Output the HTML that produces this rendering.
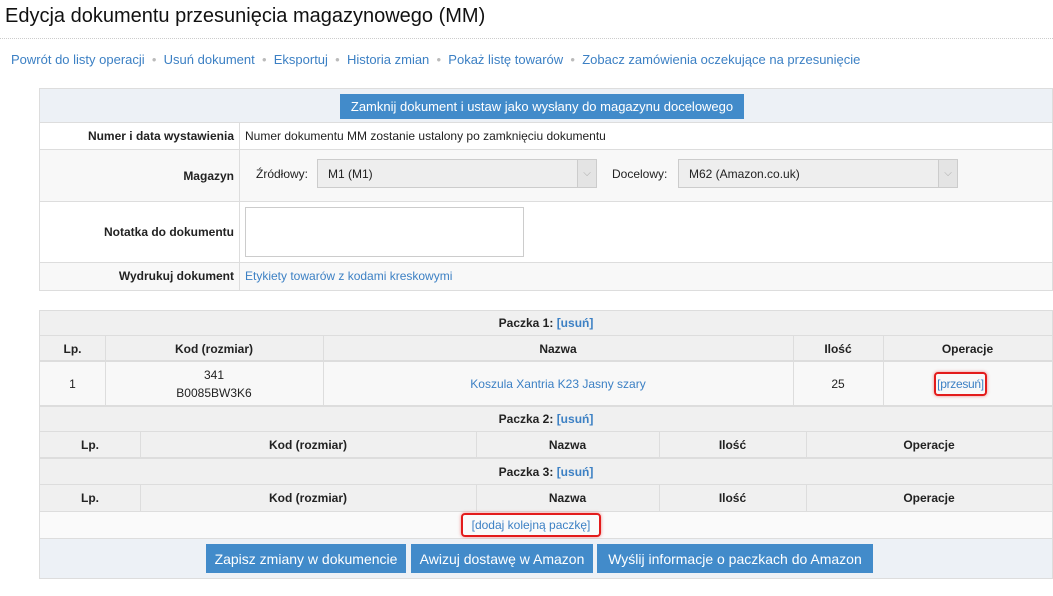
<!DOCTYPE html>
<html><head><meta charset="utf-8"><style>
body{margin:0;width:1053px;height:596px;background:#fff;font-family:"Liberation Sans",sans-serif;color:#222;position:relative;overflow:hidden;font-size:12px}
.a{position:absolute;box-sizing:border-box}
a{color:#3c80c4;text-decoration:none}
.c{display:flex;align-items:center;justify-content:center;text-align:center}
.r{display:flex;align-items:center;justify-content:flex-end;padding-right:5px;font-weight:bold}
.l{display:flex;align-items:center;padding-left:5px}
.b{font-weight:bold}
.btn{background:#428bca;color:#fff;font-size:14px}
.sel{background:#eee;border:1px solid #ccc;font-size:12px;display:flex;align-items:center;padding-left:10px}
.arr{position:absolute;right:0;top:0;bottom:0;width:18px;border-left:1px solid #ccc;background:#e4e4e4;color:#aaa;font-size:10px;display:flex;align-items:center;justify-content:center}
.red{border:2px solid #e31b1b;border-radius:4px;box-shadow:0 0 3px rgba(227,27,27,.5)}
</style></head><body>
<div class="a" style="left:5px;top:5px;font-size:20px;color:#111">Edycja dokumentu przesunięcia magazynowego (MM)</div>
<div class="a" style="left:0;top:38px;width:1053px;border-top:1px dotted #ccc"></div>
<div class="a" style="left:11px;top:52px;font-size:13px;color:#bbb;white-space:nowrap"><a>Powrót do listy operacji</a> &nbsp;•&nbsp; <a>Usuń dokument</a> &nbsp;•&nbsp; <a>Eksportuj</a> &nbsp;•&nbsp; <a>Historia zmian</a> &nbsp;•&nbsp; <a>Pokaż listę towarów</a> &nbsp;•&nbsp; <a>Zobacz zamówienia oczekujące na przesunięcie</a></div>

<div class="a" style="left:39px;top:88px;width:1014px;height:203px;border:1px solid #ddd;background:#fff"></div>
<div class="a" style="left:40px;top:89px;width:1012px;height:34px;background:#edf1f6;border-bottom:1px solid #ddd"></div>
<div class="a btn c" style="left:340px;top:94px;width:404px;height:25px;font-size:13px">Zamknij dokument i ustaw jako wysłany do magazynu docelowego</div>
<div class="a" style="left:40px;top:149px;width:1012px;height:53px;background:#f8f8f8;border-top:1px solid #ddd;border-bottom:1px solid #ddd"></div>
<div class="a" style="left:40px;top:262px;width:1012px;height:28px;background:#f8f8f8;border-top:1px solid #ddd"></div>
<div class="a" style="left:239px;top:123px;height:167px;border-left:1px solid #ddd"></div>
<div class="a r" style="left:40px;top:123px;width:199px;height:26px">Numer i data wystawienia</div>
<div class="a l" style="left:240px;top:123px;height:26px">Numer dokumentu MM zostanie ustalony po zamknięciu dokumentu</div>
<div class="a r" style="left:40px;top:149px;width:199px;height:53px">Magazyn</div>
<div class="a" style="left:256px;top:167px;font-size:12px">Źródłowy:</div>
<div class="a sel" style="left:317px;top:159px;width:280px;height:29px">M1 (M1)<span class="arr">⌵</span></div>
<div class="a" style="left:612px;top:167px">Docelowy:</div>
<div class="a sel" style="left:678px;top:159px;width:280px;height:29px">M62 (Amazon.co.uk)<span class="arr">⌵</span></div>
<div class="a r" style="left:40px;top:202px;width:199px;height:60px">Notatka do dokumentu</div>
<div class="a" style="left:245px;top:207px;width:279px;height:50px;border:1px solid #ccc;background:#fff"></div>
<div class="a r" style="left:40px;top:262px;width:199px;height:28px">Wydrukuj dokument</div>
<div class="a l" style="left:240px;top:262px;height:28px"><a>Etykiety towarów z kodami kreskowymi</a></div>

<div class="a" style="left:39px;top:310px;width:1014px;height:269px;border:1px solid #ddd;background:#f8f8f8"></div>
<div class="a c b" style="left:40px;top:311px;width:1012px;height:25px;background:#f0f0f0;border-bottom:1px solid #ddd">Paczka 1:&nbsp;<a>[usuń]</a></div>
<div class="a" style="left:40px;top:336px;width:1012px;height:26px;background:#f0f0f0;border-bottom:2px solid #ddd"></div>
<div class="a c b" style="left:40px;top:336px;width:65px;height:26px">Lp.</div>
<div class="a c b" style="left:105px;top:336px;width:218px;height:26px">Kod (rozmiar)</div>
<div class="a c b" style="left:323px;top:336px;width:470px;height:26px">Nazwa</div>
<div class="a c b" style="left:793px;top:336px;width:90px;height:26px">Ilość</div>
<div class="a c b" style="left:883px;top:336px;width:169px;height:26px">Operacje</div>
<div class="a c" style="left:40px;top:362px;width:65px;height:43px">1</div>
<div class="a c" style="left:105px;top:362px;width:218px;height:43px;line-height:18px">341<br>B0085BW3K6</div>
<div class="a c" style="left:323px;top:362px;width:470px;height:43px"><a>Koszula Xantria K23 Jasny szary</a></div>
<div class="a c" style="left:793px;top:362px;width:90px;height:43px">25</div>
<div class="a c" style="left:876px;top:362px;width:169px;height:43px"><span class="red" style="padding:3px 1px;letter-spacing:-0.3px"><a>[przesuń]</a></span></div>
<div class="a" style="left:105px;top:336px;height:69px;border-left:1px solid #ddd"></div>
<div class="a" style="left:323px;top:336px;height:69px;border-left:1px solid #ddd"></div>
<div class="a" style="left:793px;top:336px;height:69px;border-left:1px solid #ddd"></div>
<div class="a" style="left:883px;top:336px;height:69px;border-left:1px solid #ddd"></div>

<div class="a c b" style="left:40px;top:405px;width:1012px;height:27px;background:#f0f0f0;border-top:2px solid #ddd;border-bottom:1px solid #ddd">Paczka 2:&nbsp;<a>[usuń]</a></div>
<div class="a" style="left:40px;top:432px;width:1012px;height:27px;background:#f0f0f0;border-bottom:2px solid #ddd"></div>
<div class="a c b" style="left:40px;top:432px;width:100px;height:26px">Lp.</div>
<div class="a c b" style="left:140px;top:432px;width:336px;height:26px">Kod (rozmiar)</div>
<div class="a c b" style="left:476px;top:432px;width:183px;height:26px">Nazwa</div>
<div class="a c b" style="left:659px;top:432px;width:147px;height:26px">Ilość</div>
<div class="a c b" style="left:806px;top:432px;width:246px;height:26px">Operacje</div>
<div class="a" style="left:140px;top:432px;height:26px;border-left:1px solid #ddd"></div>
<div class="a" style="left:476px;top:432px;height:26px;border-left:1px solid #ddd"></div>
<div class="a" style="left:659px;top:432px;height:26px;border-left:1px solid #ddd"></div>
<div class="a" style="left:806px;top:432px;height:26px;border-left:1px solid #ddd"></div>

<div class="a c b" style="left:40px;top:459px;width:1012px;height:26px;background:#f0f0f0;border-bottom:1px solid #ddd">Paczka 3:&nbsp;<a>[usuń]</a></div>
<div class="a" style="left:40px;top:485px;width:1012px;height:27px;background:#f0f0f0;border-bottom:1px solid #ddd"></div>
<div class="a c b" style="left:40px;top:485px;width:100px;height:26px">Lp.</div>
<div class="a c b" style="left:140px;top:485px;width:336px;height:26px">Kod (rozmiar)</div>
<div class="a c b" style="left:476px;top:485px;width:183px;height:26px">Nazwa</div>
<div class="a c b" style="left:659px;top:485px;width:147px;height:26px">Ilość</div>
<div class="a c b" style="left:806px;top:485px;width:246px;height:26px">Operacje</div>
<div class="a" style="left:140px;top:485px;height:26px;border-left:1px solid #ddd"></div>
<div class="a" style="left:476px;top:485px;height:26px;border-left:1px solid #ddd"></div>
<div class="a" style="left:659px;top:485px;height:26px;border-left:1px solid #ddd"></div>
<div class="a" style="left:806px;top:485px;height:26px;border-left:1px solid #ddd"></div>

<div class="a c" style="left:40px;top:512px;width:1012px;height:27px;background:#fafafa;border-bottom:1px solid #ddd"><span class="red" style="padding:3px 9px;margin-left:-30px"><a>[dodaj kolejną paczkę]</a></span></div>
<div class="a" style="left:40px;top:539px;width:1012px;height:39px;background:#edf1f6"></div>
<div class="a btn c" style="left:206px;top:544px;width:200px;height:29px">Zapisz zmiany w dokumencie</div>
<div class="a btn c" style="left:411px;top:544px;width:182px;height:29px">Awizuj dostawę w Amazon</div>
<div class="a btn c" style="left:597px;top:544px;width:276px;height:29px">Wyślij informacje o paczkach do Amazon</div>
</body></html>
